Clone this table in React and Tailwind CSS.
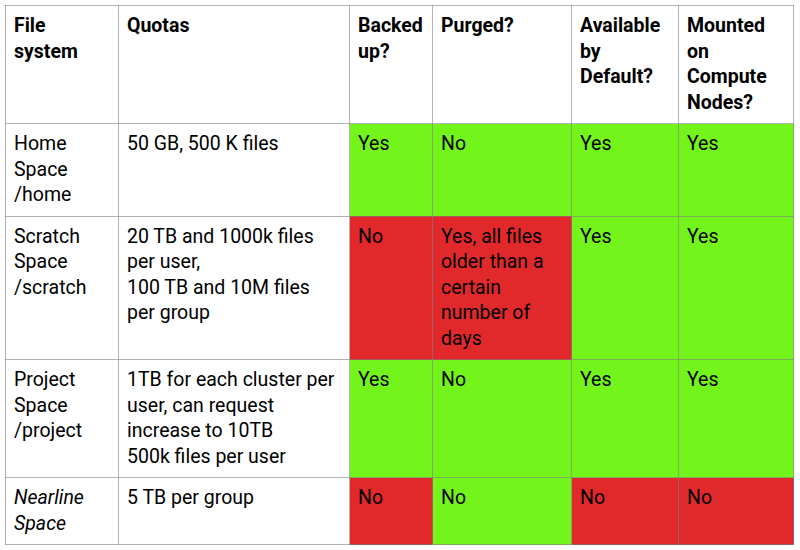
import React from "react";

const G = "bg-[#73f41a]";
const R = "bg-[#e1292b]";
const W = "bg-white";

const cell =
  "border border-[rgba(128,128,128,0.6)] align-top pl-[8px] pr-1 pt-[7px] pb-[8px] whitespace-nowrap";

const L = ({ lines }) => (
  <>
    {lines.map((l, i) => (
      <React.Fragment key={i}>
        {i > 0 && <br />}
        {l}
      </React.Fragment>
    ))}
  </>
);

const rows = [
  {
    name: ["Home", "Space", "/home"],
    quota: ["50 GB, 500 K files"],
    vals: [
      [["Yes"], G],
      [["No"], G],
      [["Yes"], G],
      [["Yes"], G],
    ],
  },
  {
    name: ["Scratch", "Space", "/scratch"],
    quota: ["20 TB and 1000k files", "per user,", "100 TB and 10M files", "per group"],
    vals: [
      [["No"], R],
      [["Yes, all files", "older than a", "certain", "number of", "days"], R],
      [["Yes"], G],
      [["Yes"], G],
    ],
  },
  {
    name: ["Project", "Space", "/project"],
    quota: ["1TB for each cluster per", "user, can request", "increase to 10TB", "500k files per user"],
    vals: [
      [["Yes"], G],
      [["No"], G],
      [["Yes"], G],
      [["Yes"], G],
    ],
  },
  {
    name: ["Nearline", "Space"],
    italic: true,
    quota: ["5 TB per group"],
    vals: [
      [["No"], R],
      [["No"], G],
      [["No"], R],
      [["No"], R],
    ],
  },
];

const headers = [
  ["File", "system"],
  ["Quotas"],
  ["Backed", "up?"],
  ["Purged?"],
  ["Available", "by", "Default?"],
  ["Mounted", "on", "Compute", "Nodes?"],
];

export default function App() {
  return (
    <div
      className="w-[800px] h-[550px] bg-white pt-[5px] pl-[5px] text-black"
      style={{ fontFamily: "Roboto, 'Liberation Sans', sans-serif" }}
    >
      <table className="table-fixed border-collapse w-[788px] text-[19.5px] leading-[25.5px]">
        <colgroup>
          <col className="w-[113px]" />
          <col className="w-[231px]" />
          <col className="w-[83px]" />
          <col className="w-[139px]" />
          <col className="w-[107px]" />
          <col className="w-[115px]" />
        </colgroup>
        <thead>
          <tr>
            {headers.map((h, i) => (
              <th key={i} className={`${cell} ${W} text-left font-bold`}>
                <L lines={h} />
              </th>
            ))}
          </tr>
        </thead>
        <tbody>
          {rows.map((r, i) => (
            <tr key={i}>
              <td className={`${cell} ${W} ${r.italic ? "italic" : ""}`}>
                <L lines={r.name} />
              </td>
              <td className={`${cell} ${W}`}>
                <L lines={r.quota} />
              </td>
              {r.vals.map(([t, c], j) => (
                <td key={j} className={`${cell} ${c}`}>
                  <L lines={t} />
                </td>
              ))}
            </tr>
          ))}
        </tbody>
      </table>
    </div>
  );
}
